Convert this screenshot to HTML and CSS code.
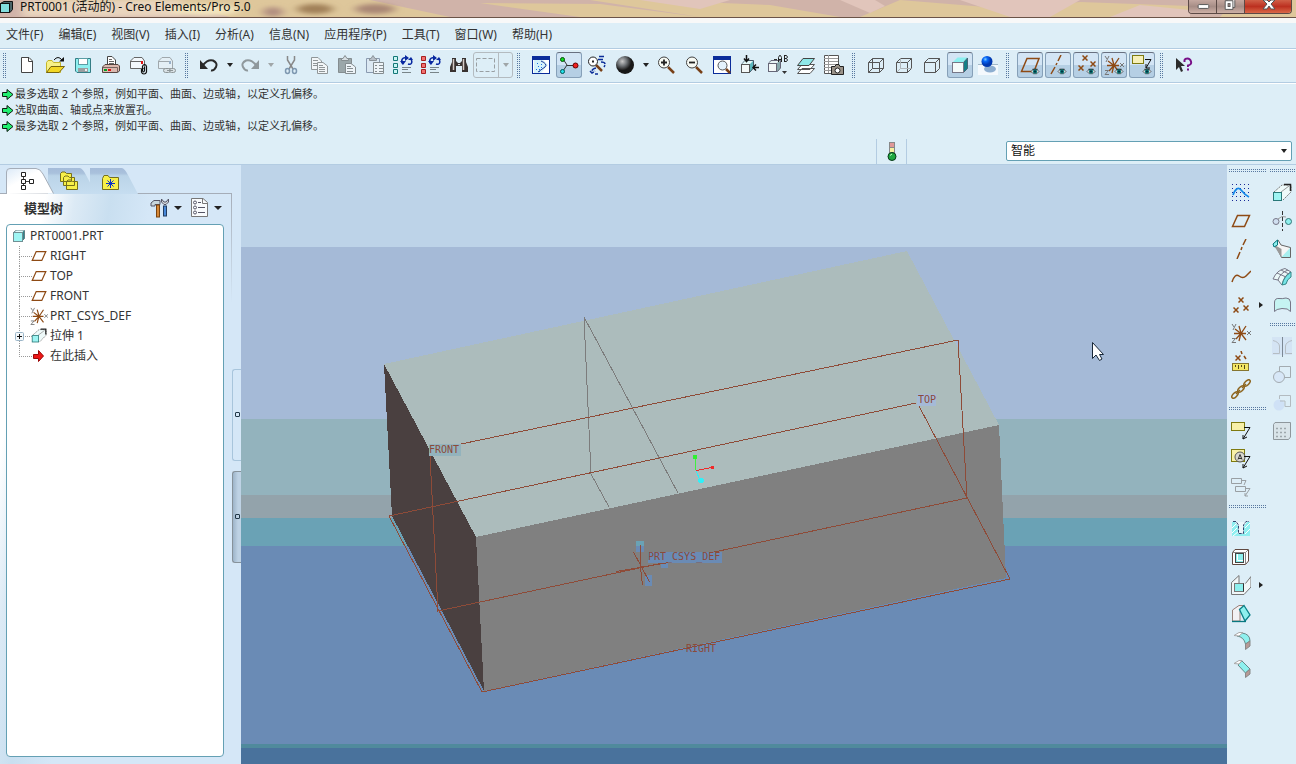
FILE: index.html
```html
<!DOCTYPE html>
<html lang="zh-CN">
<head>
<meta charset="utf-8">
<meta name="viewport" content="width=device-width, initial-scale=1">
<title>PRT0001 (活动的) - Creo Elements/Pro 5.0</title>
<link rel="stylesheet" href="styles.css">
</head>
<body>
<svg class="defs" aria-hidden="true">
  <defs>
    <radialGradient id="steel" cx="35%" cy="30%"><stop offset="0" stop-color="#c8c8c8"/><stop offset=".5" stop-color="#707478"/><stop offset="1" stop-color="#181818"/></radialGradient>
    <radialGradient id="blueball" cx="35%" cy="30%"><stop offset="0" stop-color="#80d0ff"/><stop offset=".4" stop-color="#0868f8"/><stop offset="1" stop-color="#0038b0"/></radialGradient>
    <linearGradient id="tabfill" x1="0" y1="0" x2="0" y2="1"><stop offset="0" stop-color="#a5bcd9"/><stop offset=".2" stop-color="#a9c1dc"/><stop offset=".3" stop-color="#bbd4e8"/><stop offset="1" stop-color="#c6ddf0"/></linearGradient>
    <linearGradient id="tabwhite" x1="0" y1="0" x2="1" y2="1"><stop offset="0" stop-color="#dceaf8"/><stop offset=".4" stop-color="#fff"/></linearGradient>
  </defs>
  <symbol id="plane" viewBox="0 0 20 20"><path d="M1.500 15.500L6.500 4.500H18.500L13.500 15.500Z" fill="none" stroke="#8e4a14" stroke-width="1.500"/></symbol>
  <symbol id="eye" viewBox="0 0 10 8"><path d="M.500 4L3 1.500H7L9.500 4L7 6.500H3Z" fill="#f4f4f4" stroke="#444"/><path d="M2 1.500h6" stroke="#222"/><circle cx="5" cy="4" r="2.500" fill="#0a7878"/><rect x="4" y="3" width="2" height="2" fill="#002838"/></symbol>
  <symbol id="csys" viewBox="0 0 20 20"><path d="M8 3L10 10L8 18M3 10.500H15M4 6L10 10.500L15 17M15 3L10 10.500L5 16" fill="none" stroke="#8e4a14" stroke-width="1.300"/><path d="M1 1L3 4M5 1L2 7M16 8L20 12M20 8L16 12M1 15.500H4.500L1 19.500H5" fill="none" stroke="#777"/></symbol>
  <symbol id="cross" viewBox="0 0 6 6"><path d="M.500 .500L5.500 5.500M5.500 .500L.500 5.500" stroke="#8e4a14" stroke-width="1.500" fill="none"/></symbol>
  <symbol id="extrude" viewBox="0 0 20 20"><path d="M2 9L10 2H19V9L11 17" fill="#eefafa" stroke="#777" stroke-dasharray="2 1"/><path d="M12 1.500H18.500V8" fill="none" stroke="#222" stroke-width="1.500"/><path d="M9 9L17 3" stroke="#999"/><rect x="1.500" y="9.500" width="8" height="8" fill="#9ef4f2" stroke="#287878"/></symbol>
  <symbol id="green" viewBox="0 0 12 11"><path d="M.500 3.500H5V.500L11 5.500L5 10.500V7.500H.500Z" fill="#20f070" stroke="#0c1c10" stroke-width="1"/></symbol>
  <symbol id="sheets" viewBox="0 0 20 20"><path d="M2.500 2.500H9L12.500 6V14.500H2.500Z" fill="#f2f6f8" stroke="#909698"/><path d="M4 5.500h5M4 8.500h6M4 10.500h6" stroke="#909698"/><path d="M8.500 7.500H14L18.500 11V18.500H8.500Z" fill="#f2f6f8" stroke="#909698"/><path d="M10 10.500h4M10 12.500h6M10 14.500h6M10 16.500h6" stroke="#909698"/></symbol>
  <symbol id="regen" viewBox="0 0 20 20"><path d="M.500 1.500H4.500V5.500H.500ZM.500 8.500H4.500V12.500H.500ZM.500 14.500H4.500V18.500H.500Z"/><path d="M10 9C7 5 10 2 13 3" fill="none" stroke="#0828a0" stroke-width="1.500"/><path d="M12 0L16 3L12 6ZM7 6H13L10 10Z" fill="#0828a0" stroke="none"/><path d="M18 4C20 8 18 10 15 9" fill="none" stroke="#0828a0" stroke-width="1.500"/><path d="M15 5H20L18 2Z" fill="#0828a0" stroke="none"/><path d="M9 12.500h9M9 14.500h6M9 17.500h9" stroke="#788488"/></symbol>
  <symbol id="glass" viewBox="0 0 20 20"><path d="M12 12L18 18" stroke="#784018" stroke-width="2.500"/><circle cx="8" cy="7.500" r="5.500" fill="#f7faf4" stroke="#444"/></symbol>
  <symbol id="cubewire" viewBox="0 0 20 20"><path d="M2.500 7.500H13.500V17.500H2.500ZM2.500 7.500L6.500 3.500H17.500V13.500L13.500 17.500M13.500 7.500L17.500 3.500" fill="none" stroke="#555"/></symbol>
  <symbol id="zarrow" viewBox="0 0 20 20"><path d="M13 6.500H19L12 18M12 18V14M12 18L16 16" fill="none" stroke="#111"/></symbol>
</svg>

<header class="titlebar">
  <svg class="titlebar-texture" viewBox="0 0 1296 17" preserveAspectRatio="none" aria-hidden="true">
    <defs><filter id="haze"><feGaussianBlur stdDeviation="5 2"/></filter></defs>
    <rect width="1296" height="17" fill="#d0b3a9"/>
    <path d="M40 0H370L450 17H230Q180 3 150 5T80 12ZM480 3L600 4L700 17H580ZM590 0H650L770 5L840 17H700ZM900 0L1010 9L1080 2L1190 6V17H860ZM1235 0H1296V17H1220Z" fill="#dec79b"/>
    <path d="M640 0H730L700 9ZM840 0H875L885 6L870 13ZM960 0H1080L1050 17H1010ZM1140 5L1190 10V17H1110Z" fill="#e1c5bb"/>
    <g filter="url(#haze)"><rect x="22" width="160" height="17" fill="#e9d5be"/><ellipse cx="205" cy="10" rx="35" ry="6" fill="#f2e4bd"/><ellipse cx="315" cy="9" rx="18" ry="5" fill="#a08058"/><ellipse cx="375" cy="9" rx="20" ry="5" fill="#a98674"/><ellipse cx="273" cy="12" rx="10" ry="5" fill="#b18e80"/></g>
  </svg>
  <svg class="ico-app" viewBox="0 0 14 13" aria-hidden="true"><path d="M.500 3.500L4 1.500H12.500V9.500L10 12.500H.500Z" fill="#4a6468" stroke="#111"/><rect x=".500" y="3.500" width="9" height="9" fill="#82dede" stroke="#111"/></svg>
  <h1 class="title">PRT0001 (活动的) - Creo Elements/Pro 5.0</h1>
  <div class="window-buttons">
    <button type="button" class="win" aria-label="最小化"><svg viewBox="0 0 28 13"><rect x="9.500" y="4.500" width="11" height="4" rx="1" fill="#fff" stroke="#555"/></svg></button>
    <button type="button" class="win" aria-label="还原"><svg viewBox="0 0 28 13"><path d="M10.500 0V7.500H18.500V0" fill="#fff" stroke="#555"/><path d="M8.500 .500H16.500V9.500H8.500Z" fill="#fff" stroke="#555"/><rect x="11.500" y="3.500" width="2" height="3" fill="#b69a92" stroke="#555"/></svg></button>
    <button type="button" class="win win-close" aria-label="关闭"><svg viewBox="0 0 46 13"><path d="M18 0H22L24 2L26 0H30L26 4L30 9H26L24 6L22 9H18L22 4Z" fill="#fff" stroke="#555"/></svg></button>
  </div>
</header>

<nav class="menubar" aria-label="菜单">
  <button type="button">文件(F)</button><button type="button">编辑(E)</button><button type="button">视图(V)</button><button type="button">插入(I)</button><button type="button">分析(A)</button><button type="button">信息(N)</button><button type="button">应用程序(P)</button><button type="button">工具(T)</button><button type="button">窗口(W)</button><button type="button">帮助(H)</button>
</nav>

<div class="toolbar" role="toolbar" aria-label="工具栏">
  <span class="grip grip-first"></span>
  <button type="button" class="tool" aria-label="新建"><svg viewBox="0 0 20 20"><path d="M4.500 2.500H12L15.500 6V17.500H4.500Z" fill="#fff" stroke="#444"/><path d="M11.500 2.500V6.500H15.500" fill="none" stroke="#444"/></svg></button>
  <button type="button" class="tool" aria-label="打开"><svg viewBox="0 0 20 20"><path d="M1.500 17.500V7.500L3 5.500H7L8.500 7.500H15.500V17.500Z" fill="#f7f188" stroke="#c5b62a"/><path d="M1.500 17.500L6 11.500H19.500L14 17.500Z" fill="#f2d725" stroke="#776610"/><path d="M9 5Q13 0 17 5" fill="none" stroke="#111"/><path d="M14 6.500H19V2Z" fill="#111"/></svg></button>
  <button type="button" class="tool" aria-label="保存"><svg viewBox="0 0 20 20"><path d="M2.500 3.500H17.500V17.500H4L2.500 16Z" fill="#8ef0f0" stroke="#347d85"/><rect x="5.500" y="3.500" width="9" height="6" fill="#fff" stroke="#5a9da5"/><rect x="5" y="13" width="10" height="4" fill="#9a9ea0"/><path d="M12 14h2v2h-2z" fill="#eee"/></svg></button>
  <button type="button" class="tool" aria-label="打印"><svg viewBox="0 0 20 20"><path d="M6.500 10.500V1.500H11L14.500 5V10.500Z" fill="#fff" stroke="#444"/><path d="M8 4.500h3M8 6.500h5M8 8.500h5" stroke="#666"/><path d="M1.500 12L4 9.500H17L18.500 11V16L16.500 17.500H1.500Z" fill="#dbb8ae" stroke="#554540"/><path d="M1.500 12.500H16.500V17.500" fill="none" stroke="#776560"/><rect x="3" y="14" width="3" height="2" fill="#00a020"/><rect x="7" y="14" width="3" height="2" fill="#e01010"/></svg></button>
  <button type="button" class="tool" aria-label="发送邮件"><svg viewBox="0 0 20 20"><path d="M1.500 13.500V6L5 2.500H13L15.500 6V13.500ZM1.500 6.500H14" fill="#f3f8fc" stroke="#666"/><rect x="12" y="6" width="2" height="3" fill="#e01010"/><path d="M12.500 14V17Q13 19 15 19T17.500 17V11.500Q17 9.500 15.500 9.500T13.500 11.500V16Q15 18 15.500 15.500V12" fill="none" stroke="#111" stroke-width="1.200"/></svg></button>
  <button type="button" class="tool" aria-label="邮件链接"><svg viewBox="0 0 20 20"><path d="M1.500 13.500V6L5 2.500H13L15.500 6V13.500ZM1.500 6.500H14" fill="#e4eff5" stroke="#a0a8ac"/><rect x="12" y="6" width="2" height="3" fill="#98b0c8"/><rect x="6.500" y="13.500" width="7" height="4" rx="2" fill="#d8e0e4" stroke="#8e9698"/><rect x="12.500" y="13.500" width="6" height="4" rx="2" fill="#d8e0e4" stroke="#8e9698"/><path d="M10 15.500h6" stroke="#8e9698"/></svg></button>
  <span class="grip"></span>
  <button type="button" class="tool" aria-label="撤消"><svg viewBox="0 0 20 20"><path d="M4 10Q9 4 14 5.500Q19 8 17 12T12 15.500" fill="none" stroke="#292929" stroke-width="2"/><path d="M1 5V14H9Z" fill="#292929"/></svg></button>
  <button type="button" class="drop" aria-label="撤消列表"></button>
  <button type="button" class="tool" aria-label="重做"><svg viewBox="0 0 20 20"><path d="M16 10Q11 4 6 5.500Q1 8 3 12T8 15.500" fill="none" stroke="#8f989c" stroke-width="2"/><path d="M19 5V14H11Z" fill="#8f989c"/></svg></button>
  <button type="button" class="drop drop-off" aria-label="重做列表"></button>
  <button type="button" class="tool" aria-label="剪切"><svg viewBox="0 0 20 20"><path d="M6.500 1V5L12 14M13.500 1V5L8 14" fill="none" stroke="#888" stroke-width="1.500"/><ellipse cx="6.500" cy="16" rx="2" ry="2.500" fill="none" stroke="#7e98b0" stroke-width="1.500"/><ellipse cx="13.500" cy="16" rx="2" ry="2.500" fill="none" stroke="#7e98b0" stroke-width="1.500"/></svg></button>
  <button type="button" class="tool" aria-label="复制"><svg><use href="#sheets"/></svg></button>
  <button type="button" class="tool" aria-label="粘贴"><svg viewBox="0 0 20 20"><path d="M1.500 3.500H14.500V17.500H1.500Z" fill="#9ba7aa" stroke="#858d90"/><path d="M4.500 5.500V3.500H6L8 .500L10 3.500H11.500V5.500Z" fill="#d8e0e4" stroke="#858d90"/><path d="M8.500 8.500H14L18.500 12V18.500H8.500Z" fill="#eef4f8" stroke="#858d90"/><path d="M10 11.500h4M10 13.500h6M10 16.500h6" stroke="#858d90"/></svg></button>
  <button type="button" class="tool" aria-label="选择性粘贴"><svg viewBox="0 0 20 20"><path d="M1.500 3.500H14.500V17.500H1.500Z" fill="#dce9f3" stroke="#8a9ab0"/><path d="M4.500 5.500V3.500H6L8 .500L10 3.500H11.500V5.500Z" fill="#b8c0c8" stroke="#8a9298"/><path d="M8.500 7.500H18.500V18.500H8.500Z" fill="#eef4f8" stroke="#858d90"/><path d="M10 10.500h2M14 10.500h4M10 13.500h2M14 13.500h4M10 16.500h2M14 16.500h4" stroke="#858d90"/></svg></button>
  <button type="button" class="tool" aria-label="再生"><svg fill="#c8f4f4" stroke="#147878"><use href="#regen"/></svg></button>
  <button type="button" class="tool" aria-label="再生管理器"><svg fill="#f07070" stroke="#a82020"><use href="#regen"/></svg></button>
  <button type="button" class="tool" aria-label="查找"><svg viewBox="0 0 20 20"><path d="M3 3H7V6L9 8H11L13 6V3H17V7L19 12V17H13V11H7V17H1V12L3 7Z" fill="#383230"/><path d="M4.500 4V15M14.500 4V15" stroke="#d5ccc6" stroke-width="1.500"/><path d="M9 9h2v1h-2z" fill="#ddd"/></svg></button>
  <div class="pickbox"><button type="button" aria-label="选择框"><svg viewBox="0 0 24 20"><rect x="2.500" y="3.500" width="18" height="13" fill="none" stroke="#999fa2" stroke-dasharray="4 2"/></svg></button><button type="button" class="drop drop-off" aria-label="选择方式"></button></div>
  <span class="grip"></span>
  <button type="button" class="tool" aria-label="重画"><svg viewBox="0 0 20 20"><rect x="1.500" y="1.500" width="17" height="17" fill="#fff" stroke="#0a2c9a"/><path d="M1 1H19V5H1Z" fill="#0a2c9a"/><path d="M3 5H12L17 10L10 18H3Z" fill="#d4f2fa"/><path d="M5 14.500h1M7 11.500h1M8 14.500h1M10 9.500h1M10 12.500h1M6 8.500h1M8 16.500h1" stroke="#2070e0"/><path d="M10 6Q17 9 14 12L7 17" fill="none" stroke="#1a3898"/></svg></button>
  <button type="button" class="tool pressed" aria-label="旋转中心"><svg viewBox="0 0 20 20"><path d="M4 4L8 10L4 16M8 10.500H17" fill="none" stroke="#333"/><circle cx="3.500" cy="4.500" r="2" fill="#0fdc20" stroke="#054a0a"/><circle cx="3.500" cy="16.500" r="2" fill="#20e0e8" stroke="#055"/><circle cx="16.500" cy="10.500" r="2.500" fill="#f02020" stroke="#600"/></svg></button>
  <button type="button" class="tool" aria-label="定向模式"><svg viewBox="0 0 20 20"><path d="M9 10L15 16" stroke="#784018" stroke-width="2.500"/><circle cx="6" cy="6.500" r="4.500" fill="#fff" stroke="#222"/><path d="M5 6.500h2" stroke="#222" stroke-width="2"/><path d="M12 1.500h6M11 4.500H16M14 7Q20 7 17 12M9 13Q4 14 5 18M3 16L5 18L8 16M8 19H11" fill="none" stroke="#0b2c98" stroke-width="1.500" stroke-dasharray="5 1"/></svg></button>
  <button type="button" class="tool" aria-label="外观库"><svg viewBox="0 0 20 20"><circle cx="10" cy="10" r="9" fill="url(#steel)"/></svg></button>
  <button type="button" class="drop" aria-label="外观列表"></button>
  <button type="button" class="tool" aria-label="放大"><svg viewBox="0 0 20 20"><use href="#glass" width="20" height="20"/><path d="M5 7.500h6M8 4.500v6" stroke="#222" stroke-width="1.800"/></svg></button>
  <button type="button" class="tool" aria-label="缩小"><svg viewBox="0 0 20 20"><use href="#glass" width="20" height="20"/><path d="M5 7.500h6" stroke="#222" stroke-width="1.800"/></svg></button>
  <button type="button" class="tool" aria-label="重新调整"><svg viewBox="0 0 20 20"><rect x="1.500" y="1.500" width="17" height="17" fill="#fff" stroke="#0a2c9a"/><path d="M1 1H19V5H1Z" fill="#0a2c9a"/><path d="M14 14L18 18" stroke="#784018" stroke-width="2.500"/><circle cx="10.500" cy="10.500" r="4.500" fill="#e4f2fc" stroke="#555"/></svg></button>
  <button type="button" class="tool" aria-label="重定向"><svg viewBox="0 0 20 20"><path d="M1.500 9.500L5 5.500H13.500V13L9.500 17.500H1.500Z" fill="#5bb7be" stroke="#456"/><path d="M2 9L5 6H13L10 9Z" fill="#e4f8f8"/><rect x="1.500" y="9.500" width="8" height="8" fill="#f3f8f8" stroke="#555"/><path d="M6.500 0V6M4 3.500L6.500 6.500L9 3.500M19 12.500H13M16 9.500L13 12.500L16 15.500" fill="none" stroke="#111" stroke-width="1.500"/></svg></button>
  <button type="button" class="tool" aria-label="已保存视图"><svg viewBox="0 0 20 20"><path d="M.500 8.500L3 5.500H12.500V13L9.500 16.500H.500Z" fill="#87a7ab" stroke="#667"/><path d="M1 8L3.500 6H12L9 8Z" fill="#e8f4f6"/><rect x=".500" y="8.500" width="8" height="8" fill="#f3f8f8" stroke="#667"/><path d="M6 4.500H9" stroke="#333"/><path d="M10.500 7V2.500L11.500 .500H12.500L13.500 2.500V7M10.500 4.500H13.500M16.500 .500H18.500L19.500 2L18.500 3.500H16.500V6.500H18.500L19.500 5L18.500 3.500M16.500 0V7" fill="none" stroke="#222"/><path d="M14 16H19L16.500 19Z" fill="#333"/></svg></button>
  <button type="button" class="tool" aria-label="层"><svg viewBox="0 0 20 20"><path d="M1.500 18.500L6 13.500H18.500L14 18.500ZM1.500 14.500L6 9.500H18.500L14 14.500Z" fill="#fff" stroke="#555"/><path d="M1.500 10.500L7 3.500H18.500L13 10.500Z" fill="#8fe8e8" stroke="#444"/></svg></button>
  <button type="button" class="tool" aria-label="视图管理器"><svg viewBox="0 0 20 20"><path d="M.500 .500H14.500V18.500H.500Z" fill="#fff" stroke="#555"/><path d="M0 3.500h14M0 6.500h14M0 9.500h14M0 12.500h14M0 15.500h14M4.500 0V18" stroke="#999"/><path d="M7.500 11.500H11L12 9.500H15L16 11.500H19.500V19.500H7.500Z" fill="#9a9288" stroke="#222"/><circle cx="13.500" cy="15.500" r="2.500" fill="#fff" stroke="#222"/></svg></button>
  <span class="grip"></span>
  <button type="button" class="tool" aria-label="线框"><svg viewBox="0 0 20 20"><use href="#cubewire" width="20" height="20"/><path d="M6.500 3.500V13.500H17.500M6.500 13.500L2.500 17.500" fill="none" stroke="#555"/></svg></button>
  <button type="button" class="tool" aria-label="隐藏线"><svg viewBox="0 0 20 20"><use href="#cubewire" width="20" height="20"/><path d="M6.500 3.500V13.500H17.500M6.500 13.500L2.500 17.500" fill="none" stroke="#b0b6ba"/></svg></button>
  <button type="button" class="tool" aria-label="消隐"><svg><use href="#cubewire"/></svg></button>
  <button type="button" class="tool pressed" aria-label="着色"><svg viewBox="0 0 20 20"><path d="M2.500 7.500L7.500 2.500H17.500L13.500 7.500Z" fill="#8cf0f0"/><path d="M13.500 7.500L17.500 3V13.500L13.500 17.500Z" fill="#147f86" stroke="#467"/><rect x="2.500" y="7.500" width="11" height="10" fill="#f4fafa" stroke="#778"/></svg></button>
  <button type="button" class="tool" aria-label="增强的真实感"><svg viewBox="0 0 20 20"><rect y="10" width="20" height="10" fill="#f4f9fd"/><path d="M0 9.500h20" stroke="#a0b8c8"/><ellipse cx="12" cy="14" rx="6" ry="3.500" fill="#8daed0"/><circle cx="9" cy="6.500" r="5.500" fill="url(#blueball)"/></svg></button>
  <span class="grip"></span>
  <button type="button" class="tool pressed" aria-label="基准平面显示"><svg viewBox="0 0 20 20"><path d="M1.500 16.500L7 3.500H19L14 16.500Z" fill="none" stroke="#8e4a14" stroke-width="1.500"/><use href="#eye" x="10" y="13" width="10" height="7"/></svg></button>
  <button type="button" class="tool pressed" aria-label="基准轴显示"><svg viewBox="0 0 20 20"><path d="M13 0L10 6M9 8L8 10M7 12L3 19" stroke="#8e4a14" stroke-width="1.500"/><use href="#eye" x="9" y="13" width="10" height="7"/></svg></button>
  <button type="button" class="tool pressed" aria-label="基准点显示"><svg viewBox="0 0 20 20"><use href="#cross" x="6" width="6" height="6"/><use href="#cross" x="14" y="6" width="6" height="6"/><use href="#cross" x="2" y="10" width="6" height="6"/><use href="#eye" x="10" y="13" width="10" height="7"/></svg></button>
  <button type="button" class="tool pressed" aria-label="坐标系显示"><svg viewBox="0 0 20 20"><use href="#csys" width="20" height="20"/><use href="#eye" x="10" y="13" width="10" height="7"/></svg></button>
  <button type="button" class="tool pressed" aria-label="注释显示"><svg viewBox="0 0 20 20"><rect x=".500" y=".500" width="11" height="8" fill="#f7f0b8" stroke="#7e7a10"/><path d="M13 4.500H19L14 13M14 9v4h4" fill="none" stroke="#111"/><use href="#eye" x="10" y="13" width="10" height="7"/></svg></button>
  <span class="grip"></span>
  <button type="button" class="tool" aria-label="上下文帮助"><svg viewBox="0 0 20 20"><path d="M2 3V15L5 12L7 17L9 16L7 11H11Z" fill="#2c2c2c"/><path d="M10.500 7V5Q11 3.500 13.500 3.500T17 6.500T14 10.500V12M14 13.500V15.500" fill="none" stroke="#781088" stroke-width="2"/></svg></button>
</div>

<section class="messages" aria-label="消息">
  <ul class="message-list">
    <li><svg><use href="#green"/></svg>最多选取 2 个参照，例如平面、曲面、边或轴，以定义孔偏移。</li>
    <li><svg><use href="#green"/></svg>选取曲面、轴或点来放置孔。</li>
    <li><svg><use href="#green"/></svg>最多选取 2 个参照，例如平面、曲面、边或轴，以定义孔偏移。</li>
  </ul>
  <div class="filterbar">
    <span class="status"><svg viewBox="0 0 10 20" role="img" aria-label="再生状态"><rect x="2.500" y=".500" width="5" height="5" fill="#e09898" stroke="#888"/><rect x="2.500" y="5.500" width="5" height="5" fill="#f7f0a0" stroke="#888"/><circle cx="5" cy="14.500" r="4" fill="#20a840" stroke="#083818"/><path d="M3 13.500L5 12" stroke="#c0ffc8"/></svg></span>
    <div class="filter"><select aria-label="选择过滤器"><option>智能</option></select></div>
  </div>
</section>

<main class="workspace">
  <aside class="navigator">
    <div class="nav-panel">
      <div class="tabs" role="tablist">
        <button type="button" role="tab" class="tab tab-on" aria-selected="true" aria-label="模型树"><svg class="tab-shape" viewBox="0 0 48 26"><path d="M.500 26V4Q.500 .500 4 .500H30Q34 .500 37 6L47.500 25.500" fill="url(#tabwhite)" stroke="#a5adb8"/></svg><svg class="tab-icon" viewBox="0 0 20 20"><path d="M6.500 5V16M7 10.500H12" stroke="#444"/><path d="M4.500 1.500H8.500V5.500H4.500ZM4.500 8.500H8.500V12.500H4.500ZM4.500 14.500H8.500V18.500H4.500ZM12.500 8.500H16.500V12.500H12.500Z" fill="#fff" stroke="#222"/></svg></button>
        <button type="button" role="tab" class="tab" aria-selected="false" aria-label="文件夹浏览器"><svg class="tab-shape" viewBox="0 0 48 26"><path d="M0 26V0H32Q35 1 38 7L48 26Z" fill="url(#tabfill)"/></svg><svg class="tab-icon" viewBox="0 0 20 20"><path d="M1.500 10.500V2.500L3 1H6L7.500 2.500H12.500V10.500ZM4.500 14.500V6.500L6 5H9L10.500 6.500H15.500V14.500ZM7.500 18.500V10.500L9 9H12L13.500 10.500H18.500V18.500Z" fill="#f8f048" stroke="#77701c"/></svg></button>
        <button type="button" role="tab" class="tab" aria-selected="false" aria-label="收藏夹"><svg class="tab-shape" viewBox="0 0 48 26"><path d="M0 26V0H32Q35 1 38 7L48 26Z" fill="url(#tabfill)"/></svg><svg class="tab-icon" viewBox="0 0 20 20"><path d="M1.500 18.500V7.500L3 4.500H7L8.500 6.500H17.500V18.500Z" fill="#f8f048" stroke="#77701c"/><path d="M9.500 8V17M5 12.500H14M6.500 9.500L12.500 15.500M12.500 9.500L6.500 15.500" stroke="#0830c8"/></svg></button>
      </div>
      <div class="tree-card">
        <div class="tree-head">
          <h2>模型树</h2>
          <button type="button" class="opt" aria-label="设置"><svg viewBox="0 0 20 20"><path d="M1 5L4 2.500H10V6.500H5V8H1Z" fill="#c8d6dc" stroke="#556"/><rect x="6.500" y="7" width="3" height="12" fill="#d68838" stroke="#7b4410"/><path d="M11.500 1V4L14 6.500H16L18.500 4V1L16 4H14Z" fill="#d0d4d8" stroke="#556"/><rect x="13.500" y="8" width="3" height="10" fill="#4687d8" stroke="#223c60"/></svg><span class="caret"></span></button>
          <button type="button" class="opt" aria-label="显示"><svg viewBox="0 0 20 20"><path d="M1.500 .500H13L17.500 4.500V18.500H1.500Z" fill="#f8fbfd" stroke="#777"/><path d="M12.500 .500V5.500H17" fill="none" stroke="#777"/><circle cx="5" cy="4.500" r="1.500" fill="none" stroke="#556"/><circle cx="5" cy="9.500" r="1.500" fill="none" stroke="#556"/><circle cx="5" cy="14.500" r="1.500" fill="none" stroke="#556"/><path d="M8 4.500h3M8 9.500h7M8 14.500h7" stroke="#556"/></svg><span class="caret"></span></button>
        </div>
        <div class="tree-box">
          <p class="tree-root"><svg class="cube" viewBox="0 0 14 14"><path d="M1.500 3.500L4 1.500H12.500V9.500L9.500 12.500H1.500Z" fill="#31868c" stroke="#607f84"/><path d="M2 3.500L4.500 1.500H12L10 3.500Z" fill="#e4fcfc"/><rect x="1.500" y="3.500" width="9" height="9" fill="#9ef6f4" stroke="#708f94"/></svg>PRT0001.PRT</p>
          <ul class="tree">
            <li><svg class="ti" viewBox="0 0 20 20"><use href="#plane" x="2" y="2" width="16" height="16"/></svg>RIGHT</li>
            <li><svg class="ti" viewBox="0 0 20 20"><use href="#plane" x="2" y="2" width="16" height="16"/></svg>TOP</li>
            <li><svg class="ti" viewBox="0 0 20 20"><use href="#plane" x="2" y="2" width="16" height="16"/></svg>FRONT</li>
            <li><svg class="ti" viewBox="0 0 20 20"><use href="#csys" x="1" y="1" width="18" height="18"/></svg>PRT_CSYS_DEF</li>
            <li><button type="button" class="expand" aria-label="展开"><svg viewBox="0 0 9 9"><rect x=".500" y=".500" width="8" height="8" rx="1" fill="#f4f8fa" stroke="#9cb6c8"/><path d="M2 4.500h5M4.500 2v5" stroke="#111"/></svg></button><svg class="ti" viewBox="0 0 20 20"><use href="#extrude" x="2" y="2" width="16" height="16"/></svg>拉伸 1</li>
            <li><svg class="ti" viewBox="0 0 20 20"><path d="M4.500 8.500H9.500V4.500L14.500 10L9.500 15.500V12.500H4.500Z" fill="#ed1616" stroke="#9a0808"/></svg>在此插入</li>
          </ul>
        </div>
      </div>
    </div>
    <div class="splitter">
      <button type="button" class="handle" aria-label="收起浏览器"></button>
      <button type="button" class="handle handle-dark" aria-label="收起导航器"></button>
    </div>
  </aside>

  <div class="viewport">
    <svg class="scene" viewBox="241 165 986 599" preserveAspectRatio="xMidYMid slice" role="img" aria-label="三维模型">
      <rect x="241" y="165" width="986" height="82" fill="#bdd3e8"/>
      <rect x="241" y="247" width="986" height="172" fill="#a5bad7"/>
      <rect x="241" y="419" width="986" height="76" fill="#93b3bd"/>
      <rect x="241" y="495" width="986" height="23" fill="#93a3ab"/>
      <rect x="241" y="518" width="986" height="28" fill="#6aa2b5"/>
      <rect x="241" y="546" width="986" height="198" fill="#6a8bb5"/>
      <rect x="241" y="744" width="986" height="4" fill="#508a9c"/>
      <rect x="241" y="748" width="986" height="16" fill="#49729c"/>
      <path d="M384 364L907 251L999 425L476 537Z" fill="#acbcbc"/>
      <path d="M384 364L476 537L484 691L392 516Z" fill="#4a4040"/>
      <path d="M476 537L999 425L1006 578L484 691Z" fill="#808080"/>
      <path d="M609 507L591 474L584 317L678 493" class="edge-gray"/>
      <path d="M461 444L958 340L967 498L438 611L430 456" class="edge"/>
      <path d="M916 403L389 516L482 692L1010 579L919 406" class="edge"/>
      <rect x="429" y="444" width="32" height="12" fill="#93b3bd"/>
      <rect x="917" y="394" width="19" height="12" fill="#a5bad7"/>
      <path d="M636 542h8v10h-8zM648 552h74v11h-74zM661 560h7v8h-7zM645 575h7v11h-7z" fill="#6a8bb5"/>
      <rect x="636" y="541" width="8" height="5" fill="#6aa2b5"/>
      <path d="M640.500 545V568L642.500 585M633.500 552L649.500 582M616.500 571.500L668.500 562.500" class="edge"/>
      <text x="429" y="453">FRONT</text>
      <text x="918" y="403">TOP</text>
      <text x="648" y="560">PRT_CSYS_DEF</text>
      <text x="686" y="652">RIGHT</text>
      <path d="M695.500 470V457" stroke="#40f040"/><circle cx="695" cy="457" r="2.500" fill="#30f030"/>
      <path d="M696 470.500L712 467.500" stroke="#f02828"/><circle cx="712.500" cy="467.500" r="2" fill="#f02828"/>
      <path d="M696 471L700 480" stroke="#30f0f8"/><circle cx="701" cy="480.500" r="3" fill="#30f0f8"/>
      <path d="M1092.500 342.500V358.500L1096 355L1099.500 360.500L1102 359L1099.500 354.500H1103.500Z" fill="#fff" stroke="#182838" shape-rendering="auto"/>
    </svg>
  </div>

  <div class="feature-bar" role="toolbar" aria-label="特征">
    <div class="col">
      <span class="hgrip"></span>
      <button type="button" class="feat" aria-label="草绘"><svg viewBox="0 0 20 20"><path d="M1 1.500h18M1 5.500h18M1 9.500h18M1 13.500h18M1 17.500h18" stroke="#182898" stroke-dasharray="1 3"/><path d="M2 12Q6 2 10 7T18 14" fill="none" stroke="#1488e8" stroke-width="1.800"/></svg></button>
      <button type="button" class="feat" aria-label="平面"><svg><use href="#plane"/></svg></button>
      <button type="button" class="feat" aria-label="轴"><svg viewBox="0 0 20 20"><path d="M15 0L12 6M11 8L10 11M9 13L6 20" stroke="#8e4a14" stroke-width="1.500"/></svg></button>
      <button type="button" class="feat" aria-label="曲线"><svg viewBox="0 0 20 20"><path d="M1 15Q4 6 8 9T15 9L20 4" fill="none" stroke="#8e4a14" stroke-width="1.500"/></svg></button>
      <button type="button" class="feat" aria-label="点"><svg viewBox="0 0 20 20"><use href="#cross" x="7" y="2" width="6" height="6"/><use href="#cross" x="12" y="10" width="6" height="6"/><use href="#cross" x="2" y="12" width="6" height="6"/></svg></button>
      <button type="button" class="feat" aria-label="坐标系"><svg><use href="#csys"/></svg></button>
      <button type="button" class="feat" aria-label="分析特征"><svg viewBox="0 0 20 20"><path d="M10 0L11 3M13 5L15 8" stroke="#8e4a14" stroke-width="1.500"/><use href="#cross" x="4" y="4" width="6" height="6"/><rect x="1.500" y="12.500" width="16" height="7" fill="#f4e765" stroke="#857630"/><path d="M4.500 14V16M7.500 14V18M10.500 14V16M13.500 14V18" stroke="#554a18"/></svg></button>
      <button type="button" class="feat" aria-label="参照"><svg viewBox="0 0 20 20"><g fill="none" stroke="#8d651f" stroke-width="1.500"><ellipse cx="4" cy="16" rx="4" ry="2" transform="rotate(-45 4 16)"/><ellipse cx="10" cy="10" rx="4" ry="2" transform="rotate(-45 10 10)"/><ellipse cx="16" cy="4" rx="4" ry="2" transform="rotate(-45 16 4)"/><path d="M5 15L9 11M11 9L15 5"/></g></svg></button>
      <span class="hgrip"></span>
      <button type="button" class="feat" aria-label="注释"><svg viewBox="0 0 20 20"><rect x=".500" y="1.500" width="13" height="8" fill="#f7f0a8" stroke="#7e7a10"/><use href="#zarrow" width="20" height="20"/></svg></button>
      <button type="button" class="feat" aria-label="注释传播"><svg viewBox="0 0 20 20"><rect x=".500" y=".500" width="13" height="12" fill="#f7f0a8" stroke="#7e7a10"/><circle cx="9" cy="8" r="5" fill="#d8d8d0" stroke="#555"/><path d="M7 10.500L9 5.500L11 10.500M7 9.500h4" fill="none" stroke="#333"/><use href="#zarrow" y="1" width="20" height="20"/></svg></button>
      <button type="button" class="feat" aria-label="注释元素"><svg viewBox="0 0 20 20"><path d="M.500 1.500H10.500V6.500H.500ZM4.500 9.500H14.500V14.500H4.500ZM11 3.500H15L13 8M15 11.500H19L14 19M14 16V19H17" fill="none" stroke="#999fa3"/></svg></button>
      <span class="hgrip"></span>
      <button type="button" class="feat" aria-label="孔"><svg viewBox="0 0 20 20"><path d="M1 3H19V17H1Z" fill="#90eef0"/><path d="M1 9L6 4M1 14L6 9M2 17L8 12M14 9L19 4M14 15L19 10" stroke="#fff"/><path d="M4 3H16L13 7V15H7V7Z" fill="#edf6fb"/><path d="M2 2.500H5L7.500 6V14.500H12.500V6L15 2.500H18" fill="none" stroke="#304870" stroke-dasharray="3 1"/></svg></button>
      <button type="button" class="feat" aria-label="壳"><svg viewBox="0 0 20 20"><path d="M1.500 5.500L4 2.500H17.500V14L14.500 17.500H1.500Z" fill="#fff" stroke="#604840"/><path d="M1.500 5.500H14.500V17.500M14.500 5.500L17.500 2.500" fill="none" stroke="#888"/><rect x="4.500" y="6.500" width="8" height="9" fill="#8ef0ee" stroke="#444"/><path d="M6.500 7V13.500H12" fill="none" stroke="#fff"/></svg></button>
      <button type="button" class="feat" aria-label="筋"><svg viewBox="0 0 20 20"><path d="M.500 19.500V7.500L8 .500V8M14.500 8.500L20 1.500V12L13 19.500H.500" fill="#f2f7f8" stroke="#777"/><rect x="3.500" y="8.500" width="9" height="8" fill="#8ef0ee" stroke="#777"/><path d="M12.500 8.500V16.500" stroke="#333"/></svg></button>
      <button type="button" class="feat" aria-label="拔模"><svg viewBox="0 0 20 20"><path d="M1.500 18V7L8 2.500H13L9 8V18Z" fill="#f2f1f4" stroke="#988078"/><path d="M13 2.500L19 12L14 18L8.500 6.500Z" fill="#8ef0ee" stroke="#0a8088" stroke-width="1.300"/><path d="M1 18.500H15" stroke="#087880" stroke-width="1.300"/></svg></button>
      <button type="button" class="feat" aria-label="倒圆角"><svg viewBox="0 0 20 20"><path d="M6 5L11 2Q19 3 19 10L14.500 13Q13 6 6 5Z" fill="#8ef0ee" stroke="#688"/><path d="M3 4.500L8 1.500H12L8 5Z" fill="#fff" stroke="#aaa"/><path d="M14.500 13L19 10V15L14.500 18.500Z" fill="#b69a96" stroke="#888"/></svg></button>
      <button type="button" class="feat" aria-label="倒角"><svg viewBox="0 0 20 20"><path d="M7 6L11 2L19 10L14.500 14Z" fill="#8ef0ee" stroke="#688"/><path d="M3 4.500L8 1.500H11L8 5Z" fill="#fff" stroke="#aaa"/><path d="M14.500 14L19 10V15L14.500 18.500Z" fill="#b69a96" stroke="#888"/></svg></button>
    </div>
    <div class="flyouts"><span class="fly"></span><span class="fly fly-rib"></span></div>
    <div class="col">
      <span class="hgrip"></span>
      <button type="button" class="feat" aria-label="拉伸"><svg><use href="#extrude"/></svg></button>
      <button type="button" class="feat" aria-label="旋转"><svg viewBox="0 0 20 20"><path d="M10.500 0V20" stroke="#333" stroke-dasharray="4 2"/><circle cx="4" cy="10.500" r="3" fill="#d0dff0" stroke="#778"/><circle cx="16.500" cy="10.500" r="3" fill="#8ef0ee" stroke="#377"/><path d="M6 8Q10 4 14 6" fill="none" stroke="#999"/></svg></button>
      <button type="button" class="feat" aria-label="扫描混合"><svg viewBox="0 0 20 20"><path d="M1 5L6 1L9 6L18.500 8.500V18.500H9.500L6 11Z" fill="#f5f5f5" stroke="#666"/><path d="M1 5L9.500 10V18.500Z" fill="#999"/><path d="M1 5L5.500 1V6L2 8Z" fill="#8ef0ee" stroke="#087880"/><path d="M9.500 18L18 9V18Z" fill="#a8eeee"/></svg></button>
      <button type="button" class="feat" aria-label="边界混合"><svg viewBox="0 0 20 20"><path d="M1 12Q5 3 13 1.500L19 5Q12 8 10 18L6 13Z" fill="#eaf8f8" stroke="#778"/><path d="M10 18Q12 9 19 5V10Q15 12 14 17Z" fill="#75e4e6" stroke="#388"/><path d="M5 6L14 10M9 3L17 7M6 13Q8 6 16 3" fill="none" stroke="#778"/></svg></button>
      <button type="button" class="feat" aria-label="造型"><svg viewBox="0 0 20 20"><path d="M2.500 7Q3 3 7 3.500Q10 4 14 3Q18 3 18.500 7V16.500Q16 13 10 13.500T2.500 16.500Z" fill="#c5f4f2" stroke="#778"/></svg></button>
      <span class="hgrip"></span>
      <button type="button" class="feat" aria-label="镜像"><svg viewBox="0 0 20 20"><rect width="20" height="18" fill="#d4e4f4"/><path d="M10.500 0V20" stroke="#7c8894"/><path d="M1 3.500Q7 5 7.500 9V16.500H1M20 3.500Q14 5 13.500 9V16.500H20" fill="none" stroke="#b5bdc3"/></svg></button>
      <button type="button" class="feat" aria-label="合并"><svg viewBox="0 0 20 20"><path d="M7.500 6V1.500H18.500V12.500H12" fill="none" stroke="#a3abb0"/><circle cx="7" cy="12" r="5.500" fill="#d7e7f7" stroke="#a3abb0"/></svg></button>
      <button type="button" class="feat" aria-label="修剪"><svg viewBox="0 0 20 20"><circle cx="7" cy="12" r="5.500" fill="#cfe1f6"/><path d="M7.500 6V2.500H18.500V13.500H13V8H8" fill="none" stroke="#b3bbc0"/></svg></button>
      <button type="button" class="feat" aria-label="阵列"><svg viewBox="0 0 20 20"><path d="M1.500 3.500L3 1.500H18.500V16L16.500 18.500H1.500Z" fill="#d9e4e9" stroke="#8e979c"/><path d="M4 7.500h10M4 11.500h10M4 15.500h10" stroke="#9ea7ac" stroke-width="1.500" stroke-dasharray="2 2"/></svg></button>
    </div>
  </div>
</main>
</body>
</html>
```

FILE: styles.css
```css
* { box-sizing: border-box; }

body {
  margin: 0;
  height: 100vh;
  display: flex;
  flex-direction: column;
  overflow: hidden;
  background: #ddeef7;
  color: #333;
  font: 12px/16px "Noto Sans", "Noto Sans CJK SC", sans-serif;
}

button {
  margin: 0;
  padding: 0;
  border: 0;
  background: none;
  color: inherit;
  font: inherit;
}

ul, p, h1, h2 { margin: 0; padding: 0; font: inherit; list-style: none; }

svg { display: block; }

.defs { position: absolute; width: 0; height: 0; }

/* Title bar */
.titlebar {
  position: relative;
  flex: none;
  display: flex;
  height: 18px;
  border-bottom: 1px solid #6a5348;
}
.titlebar-texture { position: absolute; inset: 0; width: 100%; height: 100%; }
.ico-app { position: relative; width: 14px; height: 13px; margin-right: 6px; }
.title { position: relative; line-height: 14px; color: #111; }
.window-buttons {
  position: relative;
  display: flex;
  height: 14px;
  margin-left: auto;
  margin-right: 4px;
  border: 1px solid #5c4a46;
  border-top: 0;
  border-radius: 0 0 4px 4px;
  overflow: hidden;
}
.win { width: 28px; background: linear-gradient(#c4a8a0, #a68d86 50%, #cdb0a6); border-right: 1px solid #5c4a46; }
.win svg { width: 100%; height: 13px; }
.win-close { width: 46px; border: 0; background: linear-gradient(#d06048, #bc3020 50%, #da6848); }

/* Menu */
.menubar {
  flex: none;
  display: flex;
  align-items: flex-start;
  gap: 15px;
  height: 31px;
  padding: 4px 6px 0;
  border-top: 5px solid #f8f8f8;
  border-bottom: 1px solid #b3cce2;
}

/* Main toolbar */
.toolbar {
  flex: none;
  display: flex;
  align-items: center;
  height: 34px;
  padding-bottom: 2px;
  border-top: 1px solid #fff;
  border-bottom: 1px solid #b3cce2;
}
.grip {
  flex: none;
  width: 4px;
  height: 27px;
  margin: 0 6px 0 4px;
  background: repeating-linear-gradient(#ddeef7 0 1px, transparent 1px 2px), linear-gradient(90deg, #5878a0 1px, transparent 1px 2px, #5878a0 2px 3px, transparent 3px);
}
.grip-first { margin-left: 3px; }
.tool {
  flex: none;
  display: grid;
  place-items: center;
  width: 26px;
  height: 26px;
  margin: 0 1px;
}
.tool svg { width: 20px; height: 20px; }
.pressed {
  border: 1px solid #86a0b8;
  border-top-color: #687080;
  border-radius: 3px;
  background: linear-gradient(#d3e5f5 50%, #b5cfe4 50%);
}
.drop { flex: none; width: 13px; height: 26px; display: grid; place-items: center; }
.drop::before, .caret {
  content: "";
  border: 3px solid transparent;
  border-top: 4px solid #222;
  border-bottom: 0;
}
.drop-off::before { border-top-color: #a0a6a8; }
.pickbox {
  flex: none;
  display: flex;
  width: 40px;
  height: 26px;
  border: 1px solid #b4bbc0;
  border-radius: 3px;
}
.pickbox svg { width: 24px; height: 20px; }
.pickbox .drop { flex: 1; height: auto; border-left: 1px solid #b4bbc0; }

/* Messages and filter */
.messages {
  flex: none;
  display: flex;
  flex-direction: column;
  height: 82px;
  border-top: 1px solid #fff;
  border-bottom: 1px solid #b3cce2;
}
.message-list { padding: 2px; font-size: 11px; }
.message-list li { display: flex; align-items: center; gap: 1px; height: 16px; }
.message-list svg { width: 12px; height: 11px; }
.filterbar { display: flex; justify-content: flex-end; margin-top: auto; padding-right: 4px; }
.status {
  display: grid;
  place-items: center;
  width: 31px;
  height: 25px;
  margin-right: 99px;
  border-left: 1px solid #b3cce2;
  border-right: 1px solid #b3cce2;
}
.status svg { width: 10px; height: 20px; }
.filter { position: relative; width: 286px; padding-top: 2px; }
.filter select {
  appearance: none;
  display: block;
  width: 100%;
  height: 20px;
  padding: 0 4px;
  border: 1px solid #64a0b4;
  border-radius: 2px;
  background: #fff;
  color: #111;
  font: inherit;
}
.filter::after {
  content: "";
  position: absolute;
  right: 5px;
  top: 10px;
  border: 3px solid transparent;
  border-top: 4px solid #222;
  border-bottom: 0;
}

/* Workspace */
.workspace { flex: 1; display: flex; min-height: 0; }
.navigator { flex: none; display: flex; width: 241px; background: #d5e7f7; }
.nav-panel { flex: 1; display: flex; flex-direction: column; min-width: 0; padding-top: 3px; }
.tabs { display: flex; height: 25px; padding-left: 6px; }
.tab { position: relative; width: 42px; height: 26px; }
.tab-on { z-index: 1; }
.tab-shape { position: absolute; left: 0; top: 0; width: 48px; height: 26px; }
.tab-icon { position: relative; width: 20px; height: 20px; margin: 0 auto; }
.tree-card {
  flex: 1;
  display: flex;
  flex-direction: column;
  padding: 0 7px 7px 6px;
  border-top: 1px solid #a5adb8;
  border-right: 1px solid;
  border-image: linear-gradient(#a5adb8, #d5e7f7 110px) 1;
  background: linear-gradient(100deg, #fff 45px, #dceaf5 75px, #c9dff0 110px, #d5e7f7 150px);
}
.tree-head { display: flex; align-items: center; height: 30px; padding: 0 2px 2px 18px; }
.tree-head h2 { margin-right: auto; font-size: 13px; font-weight: 700; }
.opt { display: flex; align-items: center; gap: 4px; margin-left: 8px; }
.opt svg { width: 20px; height: 20px; }
.caret { border-width: 4px 4px 0; }
.tree-box {
  flex: 1;
  padding-top: 1px;
  border: 1px solid #64a0b4;
  border-radius: 4px;
  background: #fff;
}
.tree-root { display: flex; align-items: center; gap: 4px; height: 20px; padding-left: 5px; }
.cube { width: 14px; height: 14px; }
.tree { margin-left: 12px; }
.tree li {
  position: relative;
  display: flex;
  align-items: center;
  gap: 1px;
  height: 20px;
  padding-left: 10px;
}
.tree li::before {
  content: "";
  position: absolute;
  left: 0;
  top: 0;
  width: 12px;
  height: 10px;
  border-left: 1px dotted #999;
  border-bottom: 1px dotted #999;
}
.tree li:not(:last-child)::after {
  content: "";
  position: absolute;
  left: 0;
  top: 10px;
  height: 10px;
  border-left: 1px dotted #999;
}
.ti { flex: none; width: 20px; height: 20px; }
.expand { position: absolute; left: -4px; top: 6px; z-index: 1; }
.expand svg { width: 9px; height: 9px; }
.splitter {
  flex: none;
  display: flex;
  flex-direction: column;
  justify-content: center;
  gap: 10px;
  width: 9px;
  padding-top: 2px;
}
.handle {
  display: grid;
  place-items: center;
  height: 92px;
  border: 1px solid #a8c5dc;
  border-right: 0;
  border-radius: 3px 0 0 3px;
}
.handle::before {
  content: "";
  width: 3px;
  height: 3px;
  border: 1px solid #223848;
  border-radius: 1px;
}
.handle-dark { border: 1px solid #87929a; border-right: 0; background: linear-gradient(90deg, #9eb4c8, #bed2e4 5px); }

.viewport { flex: 1; min-width: 0; overflow: hidden; background: #6a8bb5; }
.scene { width: 100%; height: 100%; shape-rendering: crispEdges; }
.scene text { fill: #8c4a38; font: 10px "DejaVu Sans Mono", monospace; }
.edge { fill: none; stroke: #8e4b38; }
.edge-gray { fill: none; stroke: #7c7c7c; }

/* Feature toolbar */
.feature-bar { flex: none; display: flex; width: 69px; overflow: hidden; background: #ddeef7; }
.col { flex: none; display: flex; flex-direction: column; width: 28px; padding-top: 4px; }
.feat { flex: none; display: grid; place-items: center; width: 28px; height: 28px; }
.feat svg { width: 20px; height: 20px; }
.hgrip {
  flex: none;
  width: 39px;
  height: 3px;
  margin: 0 0 7px 1px;
  background: repeating-linear-gradient(90deg, #ddeef7 0 1px, transparent 1px 2px), linear-gradient(#5878a0 1px, transparent 1px 2px, #5878a0 2px);
}
.feat + .hgrip { margin-top: 4px; }
.flyouts { width: 13px; padding-top: 137px; }
.fly { display: block; width: 4px; margin-left: 4px; border: 3px solid transparent; border-left: 4px solid #222; border-right: 0; }
.fly-rib { margin-top: 274px; }
```
